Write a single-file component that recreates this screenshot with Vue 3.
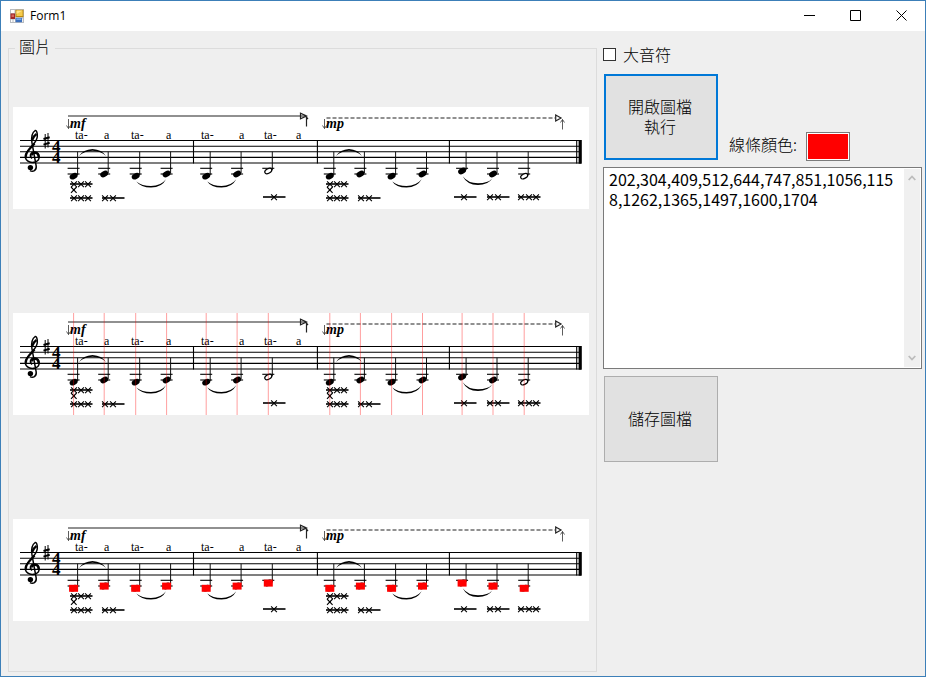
<script setup>
import { ref } from 'vue'

const largeNotes = ref(false)
const lineColor = ref('#ff0000')
const columns = [202, 304, 409, 512, 644, 747, 851, 1056, 1158, 1262, 1365, 1497, 1600, 1704]
const output = ref(columns.join(','))

const SCALE = 0.3
const pitches = 'GAGAGABGAGABAG'
const pitchY = { G: 69.2, A: 67, B: 64 }
const notes = columns.map((c, i) => ({
  x: c * SCALE,
  y: pitchY[pitches[i]],
  low: pitches[i] !== 'B',
  half: i === 6 || i === 13
}))

const staffLines = [33.5, 39.2, 44.7, 50.4, 56]
const lyrics = [
  [62, 'ta-'], [91, 'a'], [118, 'ta-'], [153, 'a'],
  [188, 'ta-'], [226, 'a'], [251, 'ta-'], [283, 'a']
]
const marks = [
  { x: 57, y: 77, crosses: [4, 11, 18] },
  { x: 57, y: 91, crosses: [4, 11, 18] },
  { x: 89, y: 91, crosses: [3, 11] },
  { x: 250, y: 90, crosses: [11] },
  { x: 313, y: 77, crosses: [4, 11, 18] },
  { x: 313, y: 91, crosses: [4, 11, 18] },
  { x: 345, y: 91, crosses: [3, 11] },
  { x: 441, y: 90, crosses: [10] },
  { x: 474, y: 90, crosses: [3, 11] },
  { x: 505, y: 90, crosses: [3, 11, 18] }
]
const slurs = [
  'M66 49 Q70 42.6 79.5 42 Q89 42.6 93 49 Q88 44 79.5 43.8 Q71 44 66 49Z',
  'M323 49 Q327 42.6 336 42 Q345 42.6 349 49 Q344 44 336 43.8 Q328 44 323 49Z',
  'M123.3 74.5 Q129 79 138 79 Q148 79 153 72.3 Q149 80.6 138 80.6 Q128 80.6 123.3 74.5Z',
  'M194.3 74.5 Q200 79 208.5 79 Q218 79 223.3 72.3 Q219 80.6 208.5 80.6 Q198 80.6 194.3 74.5Z',
  'M379.3 74.5 Q385 79 393.5 79 Q403 79 408.7 72.3 Q404 80.6 393.5 80.6 Q383 80.6 379.3 74.5Z',
  'M449.7 69.3 Q455 76.3 465 76.3 Q475 76.3 479.3 71.5 Q475 78 465 78 Q454 78 449.7 69.3Z'
]
const pictures = [
  { id: 'source', lines: false, blocks: false },
  { id: 'columns', lines: true, blocks: false },
  { id: 'heads', lines: false, blocks: true }
]
</script>

<template>
  <div class="window">
    <header class="titlebar">
      <svg class="app-icon" viewBox="0 0 14 14" aria-hidden="true">
        <path d="M0 0H14V14H0Z" fill="#b9bcc0" />
        <path d="M1 1H4.5V4H1ZM1 10.5H2.5V13H1ZM3.5 10.5H5V13H3.5ZM12.3 9.5H13V13H12.3Z" fill="#fff" />
        <path d="M.5 4.5H5V10H.5Z" fill="#a32624" />
        <path d="M1.5 5.5H4V8H1.5Z" fill="#d5635c" />
        <path d="M5.5 .8H13.5V8H5.5Z" fill="#b88710" />
        <path d="M6.5 1.6H12.6V7H6.5Z" fill="#f5cb4c" />
        <path d="M6.5 1.6H12.6L6.5 5Z" fill="#ffe58a" />
        <path d="M5.6 9H12V13.2H5.6Z" fill="#3c70bd" />
        <path d="M6.4 9.4H11.3V11H6.4Z" fill="#79a8e6" />
      </svg>
      <h1 class="title">Form1</h1>
      <button class="caption" type="button" aria-label="Minimize">
        <svg viewBox="0 0 11 11"><path d="M0 5.5H11" /></svg>
      </button>
      <button class="caption" type="button" aria-label="Maximize">
        <svg viewBox="0 0 11 11"><path d="M.5 .5H10.5V10.5H.5Z" /></svg>
      </button>
      <button class="caption" type="button" aria-label="Close">
        <svg viewBox="0 0 11 11"><path d="M.5 .5L10.5 10.5M10.5 .5L.5 10.5" /></svg>
      </button>
    </header>

    <main class="content">
      <fieldset class="group">
        <legend>圖片</legend>
        <div class="pictures">
          <svg v-for="p in pictures" :key="p.id" class="score" viewBox="0 0 576 102">
            <rect width="576" height="102" fill="#fff" />

            <g class="hair">
              <path d="M55 9H293" />
              <path d="M287.5 6.3V11.7L293.5 9Z" />
              <path d="M293.5 9.5V19.5M291.5 8L295 12" />
              <path class="light" d="M55.5 12V21.5M53.5 18.5L55.5 21.5L57.5 18.5" />
              <path d="M313.5 11H542" stroke-dasharray="4 2" />
              <path d="M542.7 8V14L548 11Z" />
              <path class="light" d="M549.5 22.5V12.5M547.5 15.5L549.5 12.5L551.5 15.5" />
              <path class="light" d="M311.5 12V21.5M309.5 18.5L311.5 21.5L313.5 18.5" />
            </g>
            <text class="dynamic" x="57" y="21">mf</text>
            <text class="dynamic" x="313" y="21">mp</text>
            <text v-for="l in lyrics" :key="l[0]" class="lyric" :x="l[0]" y="32">{{ l[1] }}</text>

            <path v-for="y in staffLines" :key="y" class="staff" :d="`M7 ${y}H568`" />
            <path class="bar" d="M180.5 33V56.6M304.4 33V56.6M436.4 33V56.6M563.7 33V56.6" />
            <rect x="565.6" y="33" width="3.2" height="23.7" />

            <g class="clef">
              <path d="M19 51.5C15.8 48.5 18 44.8 21.5 45C27.2 45.4 28 53 22.3 55C16 57 11.2 52.5 12.6 47.5C14.2 42 23.6 37 24.3 29.8C24.6 26 23.4 23 22.2 23.5C19.2 25.5 18.2 31 19 36L23.2 59C23.7 63.4 20 65.2 17 63.6" />
              <path class="swell" d="M13 50C12 45 18 41 21.5 36.5M23.5 27C22 28 20 30 19.3 33M19 48.5C19 45 25.5 44.5 25.5 50" />
              <circle cx="17.4" cy="60.6" r="2.7" />
            </g>
            <path class="sharp-thin" d="M32.2 27V41.5M35 26V40.5" />
            <path class="sharp-wide" d="M30.5 32L36.7 30.2M30.5 37.6L36.7 35.8" />
            <text class="meter" x="39" y="44.5">4</text>
            <text class="meter" x="39" y="56">4</text>

            <path v-for="s in slurs" :key="s" :d="s" />

            <g v-for="n in notes" :key="n.x">
              <path class="stem" :d="`M${n.x + 4} 44.7V${n.y - 1}`" />
              <path class="ledger" :d="`M${n.x - 6} 61.3h12`" />
              <path v-if="n.low" class="ledger" :d="`M${n.x - 6} 67h12`" />
              <ellipse
                :class="{ hollow: n.half }"
                :cx="n.x" :cy="n.y" :rx="n.half ? 3.8 : 4.2" :ry="n.half ? 2.2 : 2.9"
                :transform="`rotate(-28 ${n.x} ${n.y})`"
              />
            </g>

            <g v-for="m in marks" :key="`${m.x}-${m.y}`" class="mark">
              <path class="rule" :d="`M${m.x} ${m.y}h22.5`" />
              <path v-for="c in m.crosses" :key="c" :d="`M${m.x + c - 2.9} ${m.y - 2.6}l5.8 5.8m0 -5.8l-5.8 5.8`" />
            </g>
            <path class="cross" d="M58 80l5.6 5.8m0 -5.8l-5.6 5.8M314 80l5.6 5.8m0 -5.8l-5.6 5.8" />

            <g v-if="p.lines">
              <path v-for="n in notes" :key="n.x" class="guide" :stroke="lineColor" :d="`M${n.x} 0V102`" />
            </g>
            <g v-if="p.blocks" :fill="lineColor">
              <rect v-for="n in notes" :key="n.x" :x="n.x - 4.5" :y="n.y - 3.4" width="9" height="7" />
            </g>
          </svg>
        </div>
      </fieldset>

      <section class="tools">
        <label class="check"><input v-model="largeNotes" type="checkbox" />大音符</label>
        <div class="row">
          <button class="action primary" type="button">開啟圖檔<br />執行</button>
          <label for="line-color" class="color-label">線條顏色:</label>
          <input id="line-color" v-model="lineColor" class="swatch" type="color" />
        </div>
        <div class="output">
          <textarea v-model="output" aria-label="Columns" spellcheck="false"></textarea>
          <div class="scroll" aria-hidden="true">
            <svg viewBox="0 0 8 6"><path d="M.7 5L4 1.5L7.3 5" /></svg>
            <svg viewBox="0 0 8 6"><path d="M.7 1L4 4.5L7.3 1" /></svg>
          </div>
        </div>
        <button class="action" type="button">儲存圖檔</button>
      </section>
    </main>
  </div>
</template>

<style>
body {
  background: #f0f0f0;
}
</style>

<style scoped>
* {
  box-sizing: border-box;
}
.window {
  display: flex;
  flex-direction: column;
  height: 100vh;
  min-height: 520px;
  border: 1px solid #3c7fb8;
  background: #efefef;
  color: #000;
  font: 300 16px/20px "Noto Sans CJK TC", sans-serif;
}
.titlebar {
  display: flex;
  align-items: center;
  height: 30px;
  padding-left: 9px;
  background: #fff;
}
.app-icon {
  width: 14px;
  height: 14px;
}
.title {
  flex: 1;
  margin: 0 0 0 6px;
  font: 400 12px/16px "Open Sans", sans-serif;
}
.caption {
  display: grid;
  place-items: center;
  width: 46px;
  height: 30px;
  padding: 0 1px 2px 0;
  border: 0;
  background: none;
}
.caption svg {
  width: 11px;
  height: 11px;
  fill: none;
  stroke: #000;
}
.content {
  flex: 1;
  display: grid;
  grid-template-columns: minmax(0, 589fr) minmax(0, 319fr);
  gap: 6px;
  min-height: 0;
  padding: 8px 3px 4px 7px;
}
.group {
  display: flex;
  min-width: 0;
  margin: 0;
  padding: 0 7px 0 4px;
  border: 1px solid #dcdcdc;
}
.group legend {
  margin-left: 2px;
  padding: 0 4px 4px;
  line-height: 14px;
}
.pictures {
  flex: 1;
  display: grid;
  grid-template-rows: repeat(3, minmax(0, 1fr));
  gap: 4px;
  align-items: center;
  height: 100%;
}
.score {
  display: block;
  width: 100%;
  max-height: 100%;
}
.hair {
  fill: none;
  stroke: #222;
  stroke-width: 1.2;
}
.light {
  stroke: #333;
  stroke-width: 0.8;
}
.dynamic {
  font: italic 700 14px "Liberation Serif", serif;
}
.lyric {
  font: 12px "Liberation Serif", serif;
}
.meter {
  font: 700 17px "Liberation Serif", serif;
}
.staff {
  stroke: #000;
  stroke-width: 1.1;
}
.bar {
  stroke: #000;
  stroke-width: 1.1;
}
.clef path {
  fill: none;
  stroke: #000;
  stroke-width: 1.5;
}
.clef .swell {
  stroke-width: 2.2;
}
.sharp-thin {
  stroke: #000;
  stroke-width: 1;
}
.sharp-wide {
  stroke: #000;
  stroke-width: 2;
}
.stem {
  stroke: #111;
  stroke-width: 1;
}
.ledger {
  stroke: #000;
  stroke-width: 1.1;
}
.hollow {
  fill: #fff;
  stroke: #000;
  stroke-width: 1.2;
}
.mark path,
.cross {
  fill: none;
  stroke: #000;
  stroke-width: 1.1;
}
.mark .rule {
  stroke-width: 1.6;
}
.guide {
  stroke-width: 1;
  stroke-opacity: 0.38;
}
.tools {
  display: flex;
  flex-direction: column;
  align-items: flex-start;
  padding-top: 5px;
}
.check {
  display: flex;
  align-items: center;
  gap: 7px;
}
.check input {
  appearance: none;
  width: 13px;
  height: 13px;
  margin: 0;
  border: 1px solid #333;
  background: #fff;
}
.check input:checked {
  box-shadow: inset 0 0 0 2px #fff;
  background: #333;
}
.row {
  display: flex;
  align-items: flex-end;
  min-height: 87px;
  margin: 10px 0 6px;
}
.action {
  width: 114px;
  height: 86px;
  margin-left: 1px;
  padding: 0 2px 2px 0;
  border: 1px solid #adadad;
  background: #e1e1e1;
  color: #000;
  font: inherit;
}
.primary {
  align-self: flex-start;
  border: 2px solid #0078d7;
}
.color-label {
  margin: 0 9px 7px 11px;
}
.swatch {
  appearance: none;
  width: 44px;
  height: 29px;
  padding: 0;
  border: 1px solid #7a7a7a;
  background: #fff;
}
.swatch::-webkit-color-swatch-wrapper {
  padding: 1px;
}
.swatch::-webkit-color-swatch {
  border: 0;
  border-radius: 0;
}
.output {
  display: flex;
  align-self: stretch;
  height: 202px;
  margin-bottom: 7px;
  padding: 1px;
  border: 1px solid #7a7a7a;
  background: #fff;
}
.output textarea {
  flex: 1;
  min-width: 0;
  padding: 0 8px 0 4px;
  border: 0;
  outline: 0;
  resize: none;
  overflow: hidden;
  background: none;
  color: #000;
  font: inherit;
  font-weight: 400;
  word-break: break-all;
}
.scroll {
  display: flex;
  flex-direction: column;
  justify-content: space-between;
  align-items: center;
  width: 16px;
  padding: 6px 0;
  background: #f0f0f0;
}
.scroll svg {
  width: 8px;
  height: 6px;
  fill: none;
  stroke: #bcbcbc;
  stroke-width: 1.8;
}
</style>
